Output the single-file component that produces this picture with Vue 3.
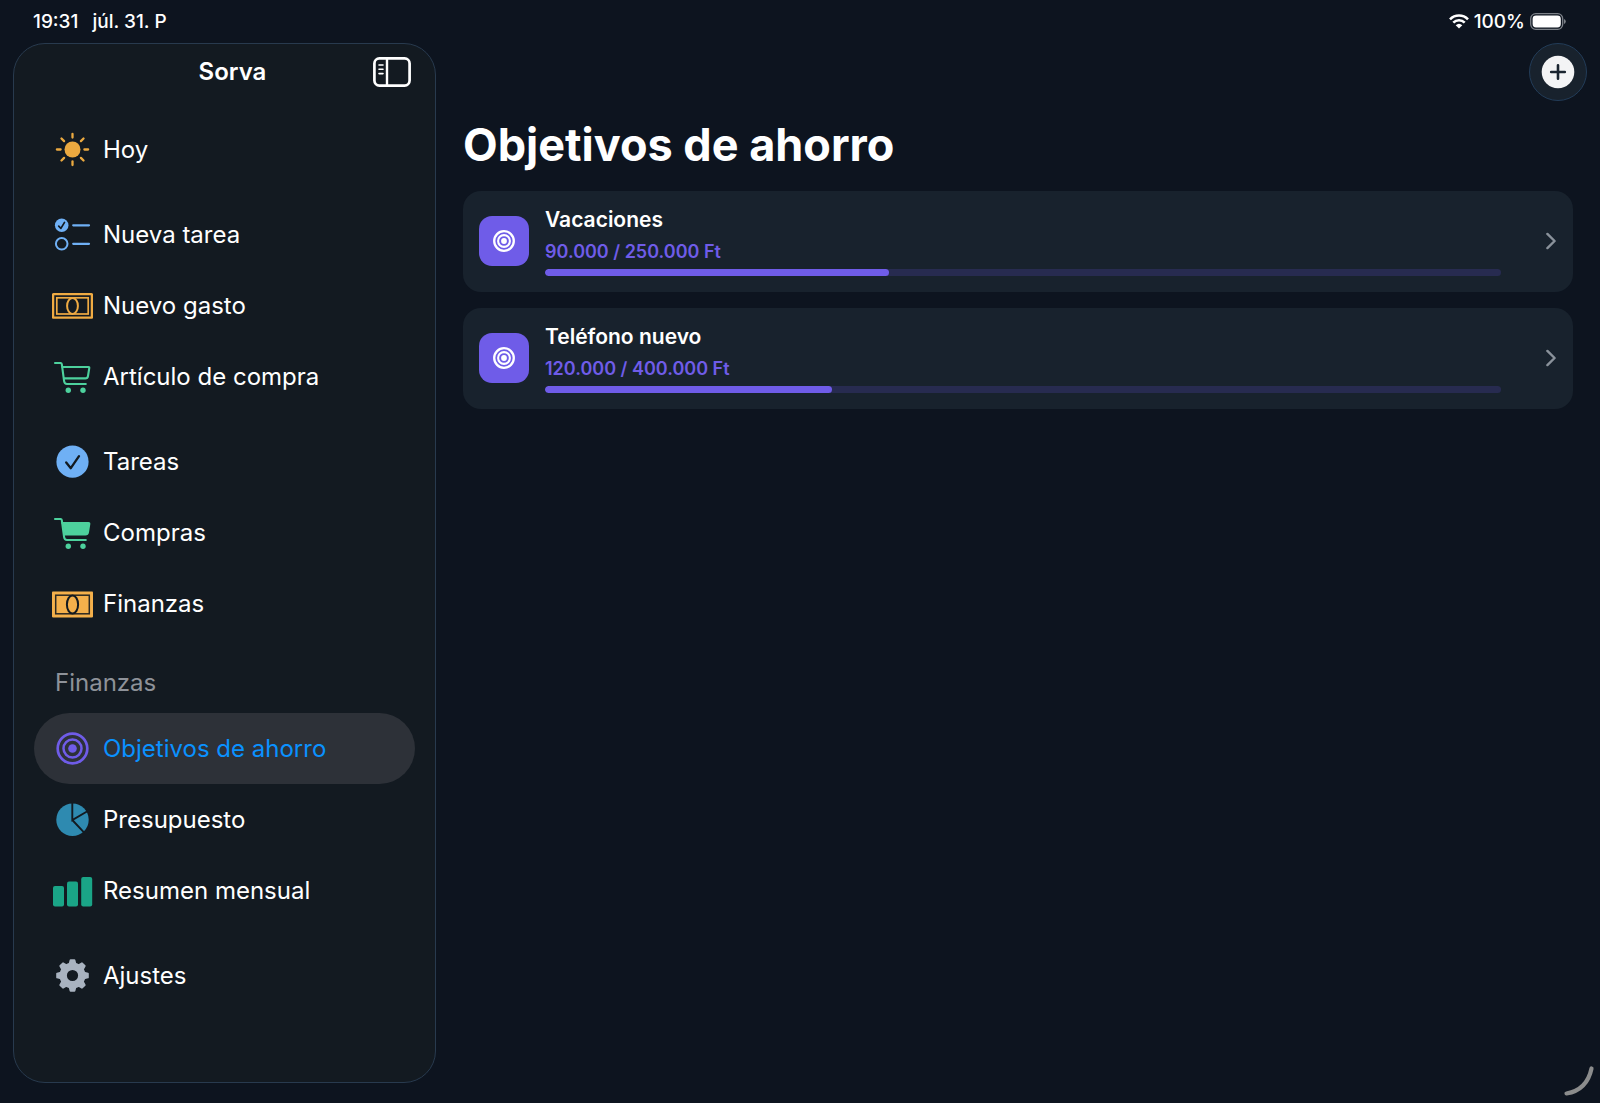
<template>
  <div class="app">
    <header class="status-bar">
      <div class="status-left">
        <span>19:31</span>
        <span>júl. 31. P</span>
      </div>
      <div class="status-right">
        <svg class="wifi" viewBox="0 0 20 15" aria-hidden="true">
          <g fill="none" stroke="#fff" stroke-width="2.6">
            <path d="M1 5.3 A12.6 12.6 0 0 1 19 5.3" />
            <path d="M4.3 8.7 A8 8 0 0 1 15.7 8.7" />
          </g>
          <path d="M6.7 11.2 A4.8 4.8 0 0 1 13.3 11.2 L10 14.5 Z" fill="#fff" />
        </svg>
        <span>100%</span>
        <svg class="battery" viewBox="0 0 36 17" aria-hidden="true">
          <rect x="0.7" y="0.7" width="32" height="15.6" rx="5" fill="none" stroke="#7c8188" stroke-width="1.3" />
          <rect x="2.6" y="2.6" width="28.2" height="11.8" rx="3.4" fill="#fff" />
          <path d="M34 6 Q35.8 6.8 35.8 8.5 Q35.8 10.2 34 11 Z" fill="#7c8188" />
        </svg>
      </div>
    </header>

    <div class="layout">
      <aside class="sidebar">
        <div class="sidebar-header">
          <h2 class="sidebar-title">Sorva</h2>
          <button type="button" class="toggle" aria-label="Sidebar">
            <svg viewBox="0 0 38 30" fill="none" stroke="#fff" stroke-linecap="round">
              <rect x="1.4" y="1.4" width="35.2" height="27.2" rx="5" stroke-width="2.7" />
              <path d="M14 2 V28" stroke-width="2.4" />
              <path d="M6 8 H10 M6 12.3 H10 M6 16.6 H10" stroke-width="1.6" />
            </svg>
          </button>
        </div>

        <nav class="nav">
          <div v-for="group in groups" :key="group.id" class="nav-group">
            <h3 v-if="group.title" class="nav-heading">{{ group.title }}</h3>
            <a
              v-for="item in group.items"
              :key="item.label"
              href="#"
              class="nav-item"
              :class="{ '-active': item.label === active }"
              @click.prevent="active = item.label"
            >
              <svg class="nav-icon" viewBox="0 0 41 41" fill="none" aria-hidden="true">
                <g v-if="item.icon === 'sun'" stroke="#eba940" stroke-width="2.3" stroke-linecap="round">
                  <circle cx="20.5" cy="20.5" r="8" fill="#eba940" stroke="none" />
                  <path
                    v-for="n in 8"
                    :key="n"
                    d="M20.5 4.9 V8.6"
                    :transform="`rotate(${n * 45} 20.5 20.5)`"
                  />
                </g>
                <g v-else-if="item.icon === 'checklist'" stroke="#6fb0f5" stroke-width="2.2" stroke-linecap="round">
                  <circle cx="9.7" cy="11.3" r="6.8" fill="#6fb0f5" stroke="none" />
                  <path d="M6.7 12.1 L8.9 14.4 L12.5 8.4" stroke="#131a20" stroke-width="1.7" stroke-linejoin="round" />
                  <circle cx="9.7" cy="29.8" r="5.8" stroke-width="2" />
                  <path d="M21.2 11.3 H37 M21.2 29.8 H37" />
                </g>
                <g v-else-if="item.icon === 'banknote'" stroke="#f0ab43">
                  <rect x="1.1" y="9.1" width="38.8" height="23.6" rx="0.6" stroke-width="2.3" />
                  <rect x="4.8" y="12.8" width="31.4" height="16.2" stroke-width="1.7" />
                  <ellipse cx="20.5" cy="20.9" rx="5.4" ry="8" stroke-width="2" />
                </g>
                <g v-else-if="item.icon === 'banknote-fill'">
                  <rect x="0" y="8.6" width="41" height="25.8" rx="0.8" fill="#f4b04b" />
                  <rect x="3.7" y="12.2" width="33.6" height="18.6" stroke="#2c2922" stroke-width="1.5" />
                  <ellipse cx="20.5" cy="21.5" rx="5.6" ry="9" stroke="#131a20" stroke-width="2" />
                </g>
                <g
                  v-else-if="item.icon === 'cart' || item.icon === 'cart-fill'"
                  stroke="#4dd19d"
                  stroke-width="2.1"
                  stroke-linecap="round"
                  stroke-linejoin="round"
                >
                  <path d="M3 7 H8.6 Q9.6 7 9.8 8.1 L12.1 25.2 Q12.5 28 15 28 H33.8" />
                  <path
                    d="M10.4 11 H36.6 Q37.4 11 37.3 11.9 L36 20 Q35.6 22.4 33.4 22.4 H12.4"
                    :fill="item.icon === 'cart-fill' ? '#4dd19d' : 'none'"
                  />
                  <circle cx="16.3" cy="34.2" r="2.7" fill="#4dd19d" stroke="none" />
                  <circle cx="31" cy="34.2" r="2.7" fill="#4dd19d" stroke="none" />
                </g>
                <g v-else-if="item.icon === 'check'">
                  <circle cx="20.5" cy="20.7" r="16.1" fill="#6fb0f5" />
                  <path
                    d="M14.2 21.5 L18.8 27.2 L27 15.2"
                    stroke="#131a20"
                    stroke-width="2.3"
                    stroke-linecap="round"
                    stroke-linejoin="round"
                  />
                </g>
                <g v-else-if="item.icon === 'target'" stroke="#6f5ce8">
                  <circle cx="20.5" cy="20.5" r="14.8" stroke-width="2.7" />
                  <circle cx="20.5" cy="20.5" r="9" stroke-width="2.5" />
                  <circle cx="20.5" cy="20.5" r="4.3" fill="#6f5ce8" stroke="none" />
                </g>
                <g v-else-if="item.icon === 'pie'">
                  <circle cx="20.5" cy="20.8" r="16.2" fill="#2e8ab0" />
                  <path d="M20.3 3.5 V21 L35.4 12.2 M20.3 21 L32.4 33.9" stroke="#131a20" stroke-width="1.9" />
                </g>
                <g v-else-if="item.icon === 'bars'" fill="#1aa587">
                  <rect x="1" y="16" width="11" height="20.6" rx="2" />
                  <rect x="15" y="11.5" width="11" height="25.1" rx="2" />
                  <rect x="29.2" y="7" width="11" height="29.6" rx="2" />
                </g>
                <g v-else-if="item.icon === 'gear'" stroke="#a9b3c0">
                  <circle cx="20.5" cy="20.5" r="9.3" stroke-width="7.4" />
                  <path
                    v-for="n in 8"
                    :key="n"
                    d="M17.6 9 L18.6 5.2 H22.4 L23.4 9 Z"
                    fill="#a9b3c0"
                    stroke-width="2"
                    stroke-linejoin="round"
                    :transform="`rotate(${n * 45} 20.5 20.5)`"
                  />
                </g>
              </svg>
              <span>{{ item.label }}</span>
            </a>
          </div>
        </nav>
      </aside>

      <main class="main">
        <div class="toolbar">
          <button type="button" class="add" aria-label="Añadir">
            <svg viewBox="0 0 34 34" aria-hidden="true">
              <circle cx="17" cy="17" r="16.3" fill="#f3f4f5" />
              <path d="M17 10.2 V23.8 M10.2 17 H23.8" stroke="#1a2530" stroke-width="2.6" stroke-linecap="round" />
            </svg>
          </button>
        </div>

        <div class="content">
          <h1 class="title">Objetivos de ahorro</h1>
          <ul class="goals">
            <li v-for="goal in goals" :key="goal.name">
              <a href="#" class="goal" @click.prevent>
                <span class="goal-icon">
                  <svg viewBox="0 0 22 22" fill="none" stroke="#fff" aria-hidden="true">
                    <circle cx="11" cy="11" r="9.8" stroke-width="2.3" />
                    <circle cx="11" cy="11" r="5.9" stroke-width="2.1" />
                    <circle cx="11" cy="11" r="2.9" fill="#fff" stroke="none" />
                  </svg>
                </span>
                <span class="goal-body">
                  <span class="goal-name">{{ goal.name }}</span>
                  <span class="goal-amount">{{ format(goal.saved) }} / {{ format(goal.total) }} Ft</span>
                  <span class="goal-track">
                    <span class="goal-fill" :style="{ width: percent(goal) + '%' }"></span>
                  </span>
                </span>
                <svg class="chevron" viewBox="0 0 10 18" fill="none" aria-hidden="true">
                  <path
                    d="M1.4 1.9 L8.6 9 L1.4 16.1"
                    stroke="#8a929b"
                    stroke-width="2.4"
                    stroke-linecap="round"
                    stroke-linejoin="round"
                  />
                </svg>
              </a>
            </li>
          </ul>
        </div>
      </main>
    </div>

    <svg class="resize-handle" viewBox="0 0 32 32" fill="none" aria-hidden="true">
      <path d="M3.5 28.5 Q24 25 28.5 3.5" stroke="#8b8c8c" stroke-width="4.2" stroke-linecap="round" />
    </svg>
  </div>
</template>

<script setup>
import { ref } from "vue";

const active = ref("Objetivos de ahorro");

const groups = [
  { id: "today", items: [{ label: "Hoy", icon: "sun" }] },
  {
    id: "create",
    items: [
      { label: "Nueva tarea", icon: "checklist" },
      { label: "Nuevo gasto", icon: "banknote" },
      { label: "Artículo de compra", icon: "cart" },
    ],
  },
  {
    id: "lists",
    items: [
      { label: "Tareas", icon: "check" },
      { label: "Compras", icon: "cart-fill" },
      { label: "Finanzas", icon: "banknote-fill" },
    ],
  },
  {
    id: "finance",
    title: "Finanzas",
    items: [
      { label: "Objetivos de ahorro", icon: "target" },
      { label: "Presupuesto", icon: "pie" },
      { label: "Resumen mensual", icon: "bars" },
    ],
  },
  { id: "settings", items: [{ label: "Ajustes", icon: "gear" }] },
];

const goals = [
  { name: "Vacaciones", saved: 90000, total: 250000 },
  { name: "Teléfono nuevo", saved: 120000, total: 400000 },
];

const format = (value) => String(value).replace(/\B(?=(\d{3})+$)/g, ".");

const percent = (goal) => (goal.saved / goal.total) * 100;
</script>

<style>
body {
  margin: 0;
  background: #0d141f;
}
</style>

<style scoped>
.app {
  display: flex;
  flex-direction: column;
  min-height: 100vh;
  position: relative;
  box-sizing: border-box;
  padding: 0 13px 20px;
  background: #0d141f;
  color: #fff;
  font-family: Inter, "Liberation Sans", sans-serif;
}
.status-bar {
  display: flex;
  justify-content: space-between;
  align-items: center;
  height: 43px;
  padding: 0 21px 0 20px;
  font-size: 19px;
  font-weight: 500;
}
.status-left {
  display: flex;
  gap: 14px;
}
.status-right {
  display: flex;
  align-items: center;
  gap: 5px;
}
.wifi {
  width: 20px;
  height: 15px;
}
.battery {
  width: 36px;
  height: 17px;
}
.layout {
  display: flex;
  flex: 1;
  gap: 27px;
}
.sidebar {
  flex: 0 0 423px;
  box-sizing: border-box;
  border: 1px solid #283a4e;
  border-radius: 32px;
  background: #131a21;
  padding-bottom: 20px;
}
.sidebar-header {
  display: grid;
  grid-template-columns: 1fr auto 1fr;
  align-items: center;
  height: 56px;
  padding: 0 24px 0 40px;
}
.sidebar-title {
  grid-column: 2;
  margin: 0;
  font-size: 24px;
  font-weight: 600;
  line-height: 28px;
}
.toggle {
  justify-self: end;
  display: flex;
  padding: 0;
  border: 0;
  background: none;
  cursor: pointer;
}
.toggle svg {
  width: 38px;
  height: 30px;
}
.nav {
  display: flex;
  flex-direction: column;
  gap: 14px;
  padding: 14px 20px 0;
}
.nav-heading {
  margin: 0;
  padding-left: 21px;
  font-size: 24px;
  font-weight: 400;
  line-height: 60px;
  color: #8e9299;
}
.nav-item {
  display: flex;
  align-items: center;
  gap: 10px;
  height: 71px;
  padding: 0 18px;
  border-radius: 36px;
  font-size: 24px;
  color: #fff;
  text-decoration: none;
}
.nav-item.-active {
  background: #2d3138;
  color: #0a91ff;
}
.nav-icon {
  flex: none;
  width: 41px;
  height: 41px;
}
.main {
  flex: 1;
  min-width: 0;
}
.toolbar {
  display: flex;
  justify-content: flex-end;
}
.add {
  display: flex;
  align-items: center;
  justify-content: center;
  width: 58px;
  height: 58px;
  padding: 0;
  border: 1px solid #223c58;
  border-radius: 50%;
  background: #18222d;
  cursor: pointer;
}
.add svg {
  width: 34px;
  height: 34px;
}
.content {
  padding-right: 14px;
}
.title {
  margin: 0;
  padding: 15px 0 17px;
  font-size: 45px;
  font-weight: 700;
  line-height: 58px;
}
.goals {
  display: flex;
  flex-direction: column;
  gap: 16px;
  margin: 0;
  padding: 0;
  list-style: none;
}
.goal {
  display: flex;
  align-items: center;
  gap: 16px;
  padding: 15px 17px 16px 16px;
  border-radius: 18px;
  background: #18222d;
  color: #fff;
  text-decoration: none;
}
.goal-icon {
  display: flex;
  align-items: center;
  justify-content: center;
  flex: none;
  width: 50px;
  height: 50px;
  border-radius: 13px;
  background: #6f5ce8;
}
.goal-icon svg {
  width: 22px;
  height: 22px;
}
.goal-body {
  display: flex;
  flex-direction: column;
  flex: 1;
  min-width: 0;
  margin-right: 29px;
}
.goal-name {
  font-size: 21px;
  font-weight: 600;
  line-height: 28px;
}
.goal-amount {
  margin: 6px 0 5px;
  font-size: 18px;
  font-weight: 600;
  line-height: 24px;
  color: #6f5ce8;
}
.goal-track {
  height: 7px;
  border-radius: 4px;
  background: #272b50;
  overflow: hidden;
}
.goal-fill {
  display: block;
  height: 100%;
  border-radius: 4px;
  background: #6f5ce8;
}
.chevron {
  flex: none;
  width: 10px;
  height: 18px;
}
.resize-handle {
  position: absolute;
  right: 5px;
  bottom: 6px;
  width: 32px;
  height: 32px;
}
</style>
